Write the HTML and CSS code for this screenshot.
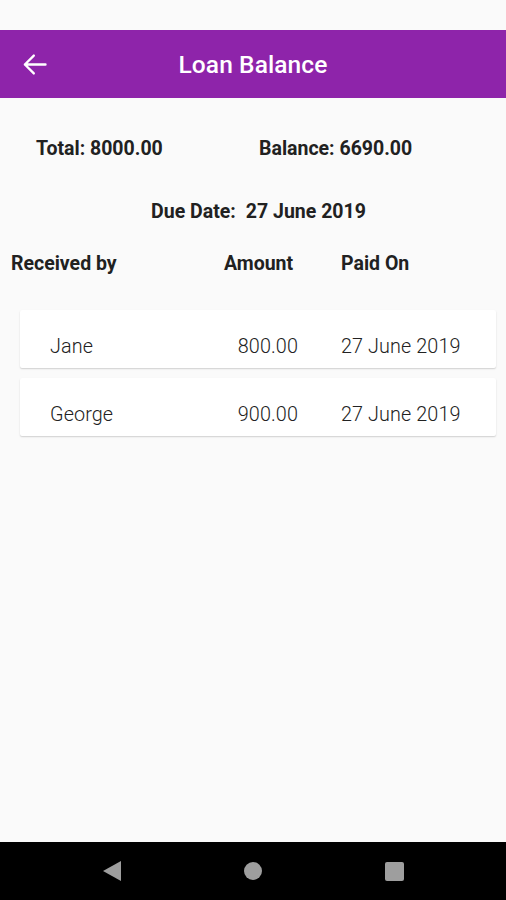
FILE: index.html
```html
<!DOCTYPE html>
<html lang="en">
<head>
  <meta charset="UTF-8" />
  <meta name="viewport" content="width=device-width, initial-scale=1.0" />
  <title>Loan Balance</title>
  <link rel="stylesheet" href="styles.css">
</head>
<body>
  <div class="status-bar"></div>

  <header class="app-bar">
    <div class="back">
      <svg width="33" height="33" viewBox="0 0 24 24">
        <path d="M20 12H5M11.5 5.5L5 12l6.5 6.5" fill="none" stroke="#fff" stroke-width="1.7" stroke-linecap="round" stroke-linejoin="round" />
      </svg>
    </div>
    <h1>Loan Balance</h1>
    <div></div>
  </header>

  <main class="content">
    <div class="summary">
      <span>Total: 8000.00</span>
      <span>Balance: 6690.00</span>
    </div>

    <div class="due">
      <span>Due Date:</span>
      <span>27 June 2019</span>
    </div>

    <div class="table-head">
      <span>Received by</span>
      <span>Amount</span>
      <span>Paid On</span>
    </div>

    <div class="list">
      <div class="card">
        <span>Jane</span>
        <span class="amount">800.00</span>
        <span>27 June 2019</span>
      </div>
      <div class="card">
        <span>George</span>
        <span class="amount">900.00</span>
        <span>27 June 2019</span>
      </div>
    </div>
  </main>

  <nav class="nav-bar">
    <div class="nav-slot"><span class="nav-back"></span></div>
    <div class="nav-slot"><span class="nav-home"></span></div>
    <div class="nav-slot"><span class="nav-recent"></span></div>
  </nav>
</body>
</html>
```

FILE: styles.css
```css
/* Reset */
*, *::before, *::after {
  margin: 0;
  padding: 0;
  box-sizing: border-box;
}

html, body {
  height: 100%;
  width: 100%;
}

body {
  font-family: Roboto, 'Noto Sans', sans-serif;
  background: #fafafa;
  color: #212121;
  display: flex;
  flex-direction: column;
  overflow: hidden;
}

.status-bar {
  height: 30px;
  flex-shrink: 0;
  background: #fafafa;
}

.app-bar {
  height: 68px;
  flex-shrink: 0;
  background: #8e24aa;
  display: grid;
  grid-template-columns: 1fr auto 1fr;
  align-items: center;
  color: #fff;
}

.back {
  display: flex;
  align-items: center;
  padding-left: 18px;
}

.back svg {
  display: block;
}

.app-bar h1 {
  font-size: 24.5px;
  font-weight: 500;
  line-height: 28px;
  letter-spacing: 0.1px;
  padding-top: 2px;
}

.content {
  flex: 1;
}

.summary {
  display: grid;
  grid-template-columns: 223px 1fr;
  padding-left: 36px;
  margin-top: 39px;
  font-size: 19.5px;
  font-weight: 700;
  line-height: 24px;
}

.due {
  display: flex;
  justify-content: center;
  gap: 10px;
  padding-left: 11px;
  margin-top: 39px;
  font-size: 19.5px;
  font-weight: 700;
  line-height: 24px;
}

.table-head {
  display: grid;
  grid-template-columns: 213px 117px 1fr;
  padding-left: 11px;
  margin-top: 28px;
  font-size: 19.5px;
  font-weight: 700;
  line-height: 24px;
}

.list {
  display: flex;
  flex-direction: column;
  gap: 10px;
  margin: 34px 10px 0 20px;
}

.card {
  display: grid;
  grid-template-columns: 1fr 80px 155px;
  column-gap: 43px;
  height: 58px;
  padding: 26px 0 0 30px;
  background: #fff;
  border-radius: 2px;
  box-shadow: 0 1px 2px rgba(0, 0, 0, 0.12), 0 1px 1px rgba(0, 0, 0, 0.06);
  font-size: 19.8px;
  font-weight: 300;
  line-height: 22px;
  letter-spacing: 0.1px;
  color: #222;
}

.amount {
  text-align: right;
}

.nav-bar {
  height: 58px;
  flex-shrink: 0;
  background: #000;
  display: flex;
  justify-content: center;
  align-items: center;
}

.nav-slot {
  width: 141px;
  display: flex;
  justify-content: center;
  align-items: center;
}

.nav-back {
  width: 0;
  height: 0;
  border-top: 10.5px solid transparent;
  border-bottom: 10.5px solid transparent;
  border-right: 18px solid #9e9e9e;
}

.nav-home {
  width: 18px;
  height: 18px;
  border-radius: 50%;
  background: #9e9e9e;
}

.nav-recent {
  width: 19px;
  height: 19px;
  border-radius: 2px;
  background: #9e9e9e;
}
```
